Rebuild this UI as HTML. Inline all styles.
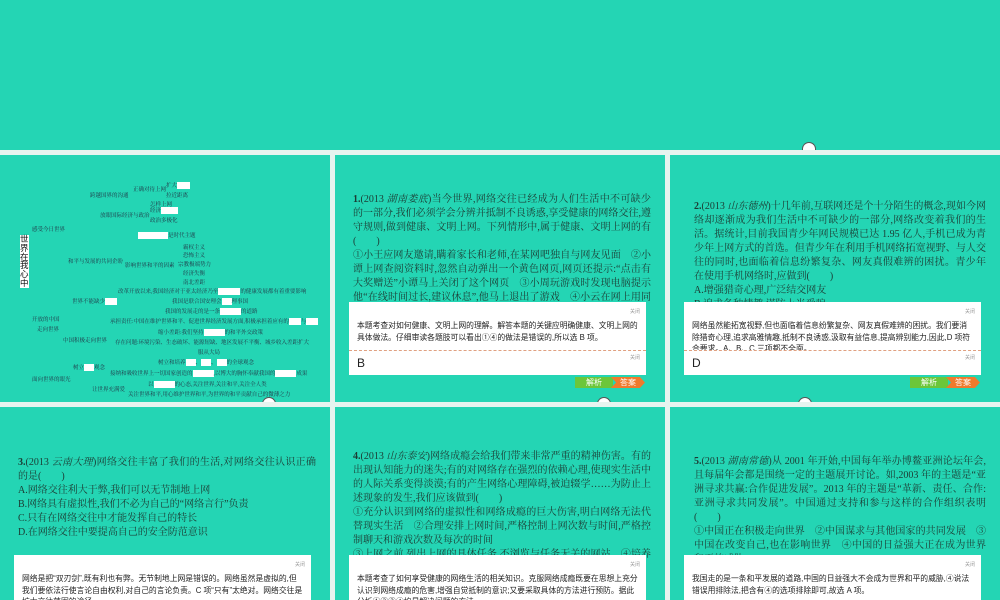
<!DOCTYPE html>
<html><head><meta charset="utf-8">
<style>
*{margin:0;padding:0;box-sizing:border-box}
body{width:1000px;height:600px;background:#e6f4ef;position:relative;overflow:hidden;font-family:"Liberation Serif","Noto Serif CJK SC",serif}
.s{position:absolute;background:#24d5b4;overflow:hidden}
.q{position:absolute;font-size:10px;line-height:14px;color:#1c3b33;width:298px;text-align:justify}
.q b{font-weight:bold}
.box{position:absolute;background:#fff;width:297px;font-family:"Liberation Sans","Noto Sans CJK SC",sans-serif;color:#222}
.cl{position:absolute;right:6px;font-size:5px;color:#999}
.ex{font-size:7.8px;line-height:11.5px;padding:18px 8px 0 8px;height:48px;overflow:hidden}
.ans{border-top:1px dashed #e0a080;height:25px;font-size:12px;padding:5px 8px}
.b1{position:absolute;height:11px;width:38px;background:#6cc63a;color:#fff;font-size:8px;line-height:11px;text-align:center;font-family:"Liberation Sans","Noto Sans CJK SC",sans-serif}
.b2{position:absolute;height:11px;width:34px;background:#f07a2c;color:#fff;font-size:8px;line-height:11px;text-align:center;clip-path:polygon(0 0,85% 0,100% 50%,85% 100%,0 100%,15% 50%);font-family:"Liberation Sans","Noto Sans CJK SC",sans-serif}
.m{position:absolute;font-size:5.5px;color:#234;white-space:nowrap}
.w{display:inline-block;background:#fff;height:7px;vertical-align:middle}
.mouse{position:absolute;width:14px;height:8px;background:#fff;border-radius:7px 7px 0 0;border:1px solid #555;border-bottom:none}
</style></head><body>
<div class="s" style="left:0;top:0;width:1000px;height:150px"><div class="mouse" style="left:802px;top:142px"></div></div>

<div class="s" style="left:0;top:155px;width:330px;height:247px">
<div style="position:absolute;left:20px;top:80px;width:9px;background:#fff;font-size:8.5px;line-height:8.8px;color:#111;font-family:'Noto Sans CJK SC',sans-serif">世界在我心中</div>
<div class="m" style="left:90px;top:36px">跨越国界的沟通</div>
<div class="m" style="left:133px;top:30px">正确对待上网</div>
<div class="m" style="left:166px;top:26px">扩大<span class="w" style="width:13px"></span></div>
<div class="m" style="left:166px;top:36px">拉近距离</div>
<div class="m" style="left:150px;top:45px">怎样上网</div>
<div class="m" style="left:100px;top:56px">放眼国际经济与政治</div>
<div class="m" style="left:150px;top:51px">经济<span class="w" style="width:17px"></span></div>
<div class="m" style="left:150px;top:61px">政治多极化</div>
<div class="m" style="left:32px;top:70px">感受今日世界</div>
<div class="m" style="left:138px;top:76px"><span class="w" style="width:30px"></span>是时代主题</div>
<div class="m" style="left:183px;top:88px">霸权主义</div>
<div class="m" style="left:183px;top:96px">恐怖主义</div>
<div class="m" style="left:68px;top:102px">和平与发展的共同企盼</div>
<div class="m" style="left:125px;top:106px">影响世界和平的因素</div>
<div class="m" style="left:178px;top:105px">宗教极端势力</div>
<div class="m" style="left:183px;top:114px">经济失衡</div>
<div class="m" style="left:183px;top:123px">南北差距</div>
<div class="m" style="left:118px;top:132px">改革开放以来,我国经济对于亚太经济乃至<span class="w" style="width:22px"></span>的健康发展都有着重要影响</div>
<div class="m" style="left:72px;top:142px">世界不能缺少<span class="w" style="width:12px"></span></div>
<div class="m" style="left:172px;top:142px">我国是联合国安理会<span class="w" style="width:10px"></span>理事国</div>
<div class="m" style="left:165px;top:152px">我国的发展走的是一条<span class="w" style="width:21px"></span>的道路</div>
<div class="m" style="left:32px;top:160px">开放的中国</div>
<div class="m" style="left:110px;top:162px">承担责任:中国在维护世界和平、促进世界经济发展方面,积极承担着应有的<span class="w" style="width:12px"></span>与<span class="w" style="width:12px"></span></div>
<div class="m" style="left:37px;top:170px">走向世界</div>
<div class="m" style="left:158px;top:173px">缩小差距:我们坚持<span class="w" style="width:21px"></span>的和平外交政策</div>
<div class="m" style="left:63px;top:181px">中国积极走向世界</div>
<div class="m" style="left:115px;top:183px">存在问题:环境污染、生态破坏、能源短缺、地区发展不平衡、城乡收入差距扩大</div>
<div class="m" style="left:198px;top:193px">服从大局</div>
<div class="m" style="left:158px;top:203px">树立和培养<span class="w" style="width:10px"></span>、<span class="w" style="width:10px"></span>、<span class="w" style="width:10px"></span>的全球观念</div>
<div class="m" style="left:73px;top:208px">树立<span class="w" style="width:10px"></span>观念</div>
<div class="m" style="left:110px;top:214px">接纳和吸收世界上一切国家创造的<span class="w" style="width:21px"></span>,以博大的胸怀奉献我国的<span class="w" style="width:21px"></span>成果</div>
<div class="m" style="left:32px;top:220px">面向世界的眼光</div>
<div class="m" style="left:148px;top:225px">以<span class="w" style="width:21px"></span>的心态,关注世界,关注和平,关注全人类</div>
<div class="m" style="left:92px;top:230px">让世界充满爱</div>
<div class="m" style="left:128px;top:235px">关注世界和平,用心维护世界和平,为世界的和平贡献自己的微薄之力</div>
<div class="mouse" style="left:262px;top:242px"></div>
</div>

<div class="s" style="left:335px;top:155px;width:330px;height:247px">
<div class="q" style="left:18px;top:38px"><b>1.</b>(2013 <i>湖南娄底</i>)当今世界,网络交往已经成为人们生活中不可缺少的一部分,我们必须学会分辨并抵制不良诱惑,享受健康的网络交往,遵守规则,做到健康、文明上网。下列情形中,属于健康、文明上网的有(　　)<br>①小王应网友邀请,瞒着家长和老师,在某网吧独自与网友见面　②小谭上网查阅资料时,忽然自动弹出一个黄色网页,网页还提示:“点击有大奖赠送”小谭马上关闭了这个网页　③小周玩游戏时发现电脑提示他“在线时间过长,建议休息”,他马上退出了游戏　④小云在网上用同学小花的名字发帖,说其他同学的坏话</div>
<div class="box" style="left:14px;top:147px"><span class="cl" style="top:6px">关闭</span><div class="ex">本题考查对如何健康、文明上网的理解。解答本题的关键应明确健康、文明上网的具体做法。仔细审读各题肢可以看出①④的做法是错误的,所以选 B 项。</div><div class="ans" style="position:relative"><span class="cl" style="top:3px">关闭</span>B</div></div>
<div class="b1" style="left:240px;top:222px">解析</div><div class="b2" style="left:276px;top:222px">答案</div>
<div class="mouse" style="left:262px;top:242px"></div>
</div>

<div class="s" style="left:670px;top:155px;width:330px;height:247px">
<div class="q" style="left:24px;top:45px;width:292px"><b>2.</b>(2013 <i>山东德州</i>)十几年前,互联网还是个十分陌生的概念,现如今网络却逐渐成为我们生活中不可缺少的一部分,网络改变着我们的生活。据统计,目前我国青少年网民规模已达 1.95 亿人,手机已成为青少年上网方式的首选。但青少年在利用手机网络拓宽视野、与人交往的同时,也面临着信息纷繁复杂、网友真假难辨的困扰。青少年在使用手机网络时,应做到(　　)<br>A.增强猎奇心理,广泛结交网友<br>B.追求各种情趣,谨防上当受骗</div>
<div class="box" style="left:14px;top:147px"><span class="cl" style="top:6px">关闭</span><div class="ex">网络虽然能拓宽视野,但也面临着信息纷繁复杂、网友真假难辨的困扰。我们要消除猎奇心理,追求高雅情趣,抵制不良诱惑,汲取有益信息,提高辨别能力,因此,D 项符合要求。A、B、C 三项都不全面。</div><div class="ans" style="position:relative"><span class="cl" style="top:3px">关闭</span>D</div></div>
<div class="b1" style="left:240px;top:222px">解析</div><div class="b2" style="left:276px;top:222px">答案</div>
<div class="mouse" style="left:128px;top:242px"></div>
</div>

<div class="s" style="left:0;top:407px;width:330px;height:193px">
<div class="q" style="left:18px;top:49px"><b>3.</b>(2013 <i>云南大理</i>)网络交往丰富了我们的生活,对网络交往认识正确的是(　　)<br>A.网络交往利大于弊,我们可以无节制地上网<br>B.网络具有虚拟性,我们不必为自己的“网络言行”负责<br>C.只有在网络交往中才能发挥自己的特长<br>D.在网络交往中要提高自己的安全防范意识</div>
<div class="box" style="left:14px;top:148px;height:50px"><span class="cl" style="top:6px">关闭</span><div class="ex">网络是把“双刃剑”,既有利也有弊。无节制地上网是错误的。网络虽然是虚拟的,但我们要依法行使言论自由权利,对自己的言论负责。C 项“只有”太绝对。网络交往是扩大交往范围的途径。</div></div>
</div>

<div class="s" style="left:335px;top:407px;width:330px;height:193px">
<div class="q" style="left:18px;top:43px"><b>4.</b>(2013 <i>山东泰安</i>)网络成瘾会给我们带来非常严重的精神伤害。有的出现认知能力的迷失;有的对网络存在强烈的依赖心理,使现实生活中的人际关系变得淡漠;有的产生网络心理障碍,被迫辍学……为防止上述现象的发生,我们应该做到(　　)<br>①充分认识到网络的虚拟性和网络成瘾的巨大伤害,明白网络无法代替现实生活　②合理安排上网时间,严格控制上网次数与时间,严格控制聊天和游戏次数及每次的时间<br>③上网之前,列出上网的具体任务,不浏览与任务无关的网站　④培养其他</div>
<div class="box" style="left:14px;top:148px;height:50px"><span class="cl" style="top:6px">关闭</span><div class="ex">本题考查了如何享受健康的网络生活的相关知识。克服网络成瘾既要在思想上充分认识到网络成瘾的危害,增强自觉抵制的意识;又要采取具体的方法进行预防。据此分析①②③④均是解决问题的方法。</div></div>
</div>

<div class="s" style="left:670px;top:407px;width:330px;height:193px">
<div class="q" style="left:24px;top:48px;width:292px"><b>5.</b>(2013 <i>湖南常德</i>)从 2001 年开始,中国每年举办博鳌亚洲论坛年会,且每届年会都是围绕一定的主题展开讨论。如,2003 年的主题是“亚洲寻求共赢:合作促进发展”。2013 年的主题是“革新、责任、合作:亚洲寻求共同发展”。中国通过支持和参与这样的合作组织表明(　　)<br>①中国正在积极走向世界　②中国谋求与其他国家的共同发展　③中国在改变自己,也在影响世界　④中国的日益强大正在成为世界和平的威胁<br>A.①②③　　　　　B.②③④</div>
<div class="box" style="left:14px;top:148px;height:50px"><span class="cl" style="top:6px">关闭</span><div class="ex">我国走的是一条和平发展的道路,中国的日益强大不会成为世界和平的威胁,④说法错误用排除法,把含有④的选项排除即可,故选 A 项。</div></div>
</div>
</body></html>
